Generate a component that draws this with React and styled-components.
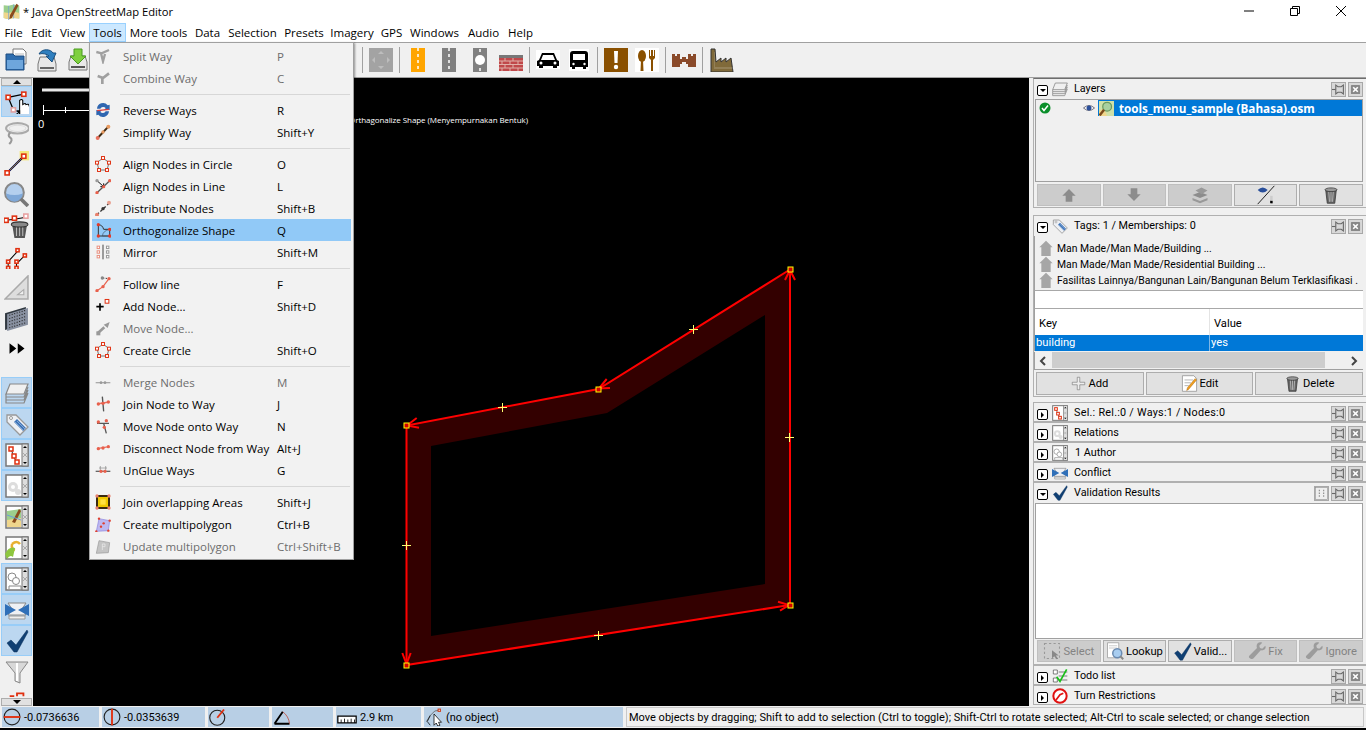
import styled, { createGlobalStyle } from "styled-components";

const GlobalStyle = createGlobalStyle`
  html, body {
    margin: 0;
    width: 1366px;
    height: 730px;
    overflow: hidden;
    background: #000;
  }
  body {
    font-family: "Open Sans", "Noto Sans", sans-serif;
    font-size: 11.5px;
    color: #000;
  }
`;

const Window = styled.div`
  position: relative;
  display: flex;
  flex-direction: column;
  width: 1366px;
  height: 730px;
  background: #f0f0f0;
  overflow: hidden;
`;

const TitleBar = styled.div`
  display: flex;
  align-items: center;
  height: 22px;
  box-sizing: border-box;
  background: #fff;
  padding: 2px 2px 0 3px;
`;

const TitleText = styled.span`
  margin-left: 3px;
  font-size: 11.2px;
  flex: 1;
`;

const WinBtn = styled.div`
  width: 46px;
  display: flex;
  justify-content: center;
  margin-top: -2px;
`;

const MenuBar = styled.div`
  display: flex;
  height: 20px;
  background: #fff;
  border-bottom: 1px solid #a0a0a0;
  padding-top: 1px;
  box-sizing: content-box;
`;

const MenuName = styled.div`
  display: flex;
  align-items: center;
  justify-content: center;
  box-sizing: border-box;
  width: ${(p) => p.$w}px;
  height: 19px;
  white-space: nowrap;
  background: ${(p) => (p.$open ? "#cce8ff" : "transparent")};
  border: 1px solid ${(p) => (p.$open ? "#99d1ff" : "transparent")};
`;

const ToolBar = styled.div`
  display: flex;
  align-items: center;
  height: 34px;
  padding-left: 4px;
  background: #f0f0f0;
  border-bottom: 1px solid #a0a0a0;
`;

const Tool = styled.div`
  flex: none;
  width: 24px;
  height: 24px;
  margin-left: ${(p) => p.$ml || 0}px;
  display: flex;
  justify-content: center;
`;

const ToolSep = styled.div`
  flex: none;
  width: 1px;
  height: 26px;
  background: #a0a0a0;
  margin-left: ${(p) => p.$ml || 0}px;
`;

const Main = styled.div`
  display: flex;
  height: 628px;
`;

const SideBar = styled.div`
  flex: none;
  width: 33px;
  display: flex;
  flex-direction: column;
  align-items: center;
`;

const SideArrow = styled.div`
  flex: none;
  box-sizing: border-box;
  width: 31px;
  height: 8px;
  margin-bottom: ${(p) => p.$mb || 0}px;
  margin-top: ${(p) => (p.$down ? "auto" : "0")};
  background: #e1e1e1;
  border: 1px solid #adadad;
  display: flex;
  align-items: center;
  justify-content: center;
  &::after {
    content: "";
    border-left: 4px solid transparent;
    border-right: 4px solid transparent;
    ${(p) => (p.$down ? "border-top: 4px solid #000;" : "border-bottom: 4px solid #000;")}
  }
`;

const SideBtn = styled.div`
  flex: none;
  box-sizing: border-box;
  width: 31px;
  height: 31px;
  margin-bottom: ${(p) => p.$mb || 0}px;
  display: flex;
  align-items: center;
  justify-content: center;
  background: ${(p) => (p.$on ? "#bcd7f0" : "transparent")};
  border: 1px solid ${(p) => (p.$on ? "#98cdf8" : "transparent")};
`;

const SideClip = styled.div`
  flex: none;
  height: 11px;
  width: 26px;
  overflow: hidden;
  display: flex;
  align-items: flex-end;
  justify-content: center;
`;

const MapView = styled.div`
  flex: none;
  width: 996px;
  height: 628px;
  background: #000;
`;

const MapSvg = styled.svg`
  display: block;
  width: 100%;
  height: 100%;
`;

const Panels = styled.div`
  flex: none;
  width: 333px;
  margin-left: 4px;
  display: flex;
  flex-direction: column;
  font-family: Roboto, sans-serif;
  font-size: 10.8px;
`;

const Panel = styled.section`
  flex: none;
  box-sizing: border-box;
  height: ${(p) => p.$h}px;
  margin-bottom: ${(p) => p.$mb || 0}px;
  border: 1px solid #b0b0b0;
  border-right: 0;
  border-top-color: ${(p) => p.$top || "#b0b0b0"};
  display: flex;
  flex-direction: column;
`;

const PanelHead = styled.header`
  flex: none;
  height: 20px;
  display: flex;
  align-items: center;
  padding: 0 3px 0 3px;
`;

const Toggle = styled.div`
  flex: none;
  box-sizing: border-box;
  width: 11px;
  height: 11px;
  margin-top: 3px;
  border: 1px solid #000;
  border-radius: 2px;
  background: #fff;
  display: flex;
  align-items: center;
  justify-content: center;
  &::after {
    content: "";
    ${(p) =>
      p.$open
        ? `border-left: 3px solid transparent; border-right: 3px solid transparent; border-top: 3px solid #000;`
        : `border-top: 3px solid transparent; border-bottom: 3px solid transparent; border-left: 3px solid #000;`}
  }
`;

const HeadIcon = styled.div`
  flex: none;
  width: 16px;
  margin-left: 4px;
`;

const HeadTitle = styled.span`
  flex: 1;
  margin-left: ${(p) => p.$ml || 6}px;
  padding-bottom: 2px;
  white-space: nowrap;
  letter-spacing: ${(p) => p.$ls || 0}px;
`;

const HeadBtn = styled.div`
  flex: none;
  box-sizing: border-box;
  width: 15px;
  height: 15px;
  margin-left: 2px;
  background: #d8d8d8;
  border: 1px solid #a8a8a8;
  display: flex;
  align-items: center;
  justify-content: center;
`;

const ListBox = styled.div`
  flex: 1;
  margin: 0 3px 0 1px;
  border: 1px solid #a0a0a0;
  background: ${(p) => p.$bg || "#f0f0f0"};
`;

const LayerRow = styled.div`
  display: flex;
  align-items: center;
  height: 16px;
`;

const LayerCheck = styled.div`
  width: 47px;
  padding-left: 3px;
  box-sizing: border-box;
`;

const LayerEye = styled.div`
  width: 15px;
`;

const LayerName = styled.div`
  flex: 1;
  display: flex;
  align-items: center;
  height: 16px;
  padding-left: 1px;
  background: #0078d7;
  color: #fff;
  font-family: "Open Sans", sans-serif;
  font-weight: 700;
  font-size: 11.7px;
  white-space: nowrap;
  overflow: hidden;
  gap: 5px;
`;

const ButtonRow = styled.div`
  flex: none;
  display: flex;
  gap: ${(p) => p.$gap || 2}px;
  height: ${(p) => p.$h || 22}px;
  margin: ${(p) => p.$m || "2px 4px 0 3px"};
`;

const PanelButton = styled.div`
  flex: 1;
  box-sizing: border-box;
  display: flex;
  align-items: center;
  justify-content: center;
  gap: 2px;
  white-space: nowrap;
  font-size: 11.2px;
  background: ${(p) => (p.$off ? "#cccccc" : "#e1e1e1")};
  border: 1px solid ${(p) => (p.$off ? "#bfbfbf" : "#adadad")};
  color: ${(p) => (p.$off ? "#838383" : "#000")};
`;

const PresetList = styled.div`
  flex: none;
  height: 54px;
  padding-top: 4px;
  box-sizing: border-box;
  margin-right: 3px;
  border-left: 1px solid #a0a0a0;
  font-size: 10.4px;
`;

const PresetRow = styled.div`
  display: flex;
  align-items: center;
  height: 16px;
  white-space: nowrap;
  overflow: hidden;
  padding-left: 3px;
  gap: 3px;
`;

const FilterInput = styled.div`
  flex: none;
  height: 19px;
  box-sizing: border-box;
  margin-right: 3px;
  background: #fff;
  border-top: 1px solid #a8a8a8;
  border-bottom: 1px solid #a8a8a8;
  border-left: 1px solid #a0a0a0;
`;

const TagTable = styled.div`
  flex: none;
  display: grid;
  grid-template-columns: 174px 1fr;
  margin-right: 3px;
  border-left: 1px solid #a0a0a0;
  font-size: 11.2px;
`;

const TagHead = styled.div`
  height: 26px;
  box-sizing: border-box;
  display: flex;
  align-items: center;
  padding: 2px 0 0 4px;
  background: #fff;
  border-left: ${(p) => (p.$second ? "1px solid #e4e4e4" : "0")};
`;

const TagCell = styled.div`
  height: 16px;
  box-sizing: border-box;
  display: flex;
  align-items: center;
  padding: 0 0 2px 1px;
  background: #0078d7;
  color: #fff;
  border-left: ${(p) => (p.$second ? "1px solid #7fb6e6" : "0")};
`;

const HScroll = styled.div`
  flex: none;
  height: 17px;
  margin: 1px 3px 0 0;
  display: flex;
  align-items: center;
  justify-content: space-between;
  padding: 0 5px 0 4px;
  background: #f0f0f0;
  position: relative;
  border-left: 1px solid #a0a0a0;
  border-bottom: 1px solid #a0a0a0;
`;

const ScrollThumb = styled.div`
  position: absolute;
  left: 17px;
  top: 0;
  width: 273px;
  height: 16px;
  background: #cdcdcd;
`;

const StatusBar = styled.div`
  flex: none;
  display: flex;
  gap: 3px;
  height: 22px;
  padding: 1px 2px 0 2px;
  box-sizing: border-box;
  font-family: Roboto, sans-serif;
  font-size: 11px;
`;

const StatusCell = styled.div`
  flex: none;
  box-sizing: border-box;
  width: ${(p) => p.$w}px;
  height: 20px;
  display: flex;
  align-items: center;
  gap: 3px;
  padding-left: 1px;
  background: #b8cfe5;
  white-space: nowrap;
`;

const HelpText = styled.div`
  flex: 1;
  height: 20px;
  box-sizing: border-box;
  display: flex;
  align-items: center;
  padding-left: 2px;
  border: 1px solid #c8c8c8;
  background: #f0f0f0;
  white-space: nowrap;
  overflow: hidden;
`;

const ScreenEdge = styled.div`
  flex: none;
  height: 2px;
  background: #000;
`;

const ToolsMenu = styled.nav`
  position: absolute;
  left: 89px;
  top: 42px;
  width: 265px;
  box-sizing: border-box;
  padding: 2px 2px 2px;
  background: #f2f2f2;
  border: 1px solid #a0a0a0;
  box-shadow: 1px 1px 2px rgba(0, 0, 0, 0.4);
`;

const MenuRow = styled.div`
  display: flex;
  align-items: center;
  height: 22px;
  white-space: nowrap;
  background: ${(p) => (p.$active ? "#91c9f7" : "transparent")};
  color: ${(p) => (p.$off ? "#6d6d6d" : "#000")};
`;

const MenuIcon = styled.div`
  flex: none;
  width: 31px;
  padding-left: 3px;
  box-sizing: border-box;
`;

const MenuLabel = styled.div`
  flex: none;
  width: 154px;
`;

const MenuSep = styled.div`
  height: 10px;
  display: flex;
  align-items: center;
  padding-left: 28px;
  &::after {
    content: "";
    flex: 1;
    height: 1px;
    margin-right: 1px;
    background: #d7d7d7;
  }
`;

const Svg = styled.svg`
  display: block;
  flex: none;
`;

const sq = (x, y, c = "#e03010", r = 2) => (
  <rect x={x - r} y={y - r} width={r * 2} height={r * 2} fill="#fff" stroke={c} strokeWidth="1.5" />
);
const dot = (x, y, c = "#e8604c", r = 2.5) => <circle cx={x} cy={y} r={r} fill={c} />;

const GlyphPanel = ({ children }) => (
  <>
    <rect x="1" y="1" width="22" height="22" fill="#fff" stroke="#777" strokeWidth="1.5" />
    {children}
    <rect x="17" y="1" width="6" height="22" fill="#ddd" stroke="#777" />
    <path d="M18 5h4l-2-2zM18 19h4l-2 2z" fill="#000" />
    <path d="M18 10l4 4M22 10l-4 4" stroke="#aaa" />
  </>
);

const ICONS = {
  logo: (
    <>
      <path d="M1 3l7 1 7-2 8 2v18l-8-1-7 2-7-2z" fill="#9ccf8d" />
      <path d="M1 13l7 1 7-2 8 2v8l-8-1-7 2-7-2z" fill="#f0d68c" />
      <path d="M8 4v20M15 2v20" stroke="#6f9fd8" />
      <path d="M19 1l-9 16-1 6 4-3 9-17z" fill="#8a4b1c" />
    </>
  ),
  open: (
    <>
      <path d="M9 1h10l3 3v12H9z" fill="#fff" stroke="#777" />
      <path d="M11 6h9M11 9h9" stroke="#bbb" />
      <path d="M2 6h7l2 2h9v14H2z" fill="#2f6eaf" stroke="#1f4d80" />
      <path d="M3 12h16v9H3z" fill="#6ea6dc" />
    </>
  ),
  save: (
    <>
      <path d="M3 16l2-7h14l2 7v7H3z" fill="#e8e8e8" stroke="#777" />
      <path d="M5 19h14v2H5z" fill="#666" />
      <path d="M4 6c3-6 12-5 14-1l3 0-4 9-6-6 3 0c-2-2-6-3-10-2z" fill="#2f7fbf" stroke="#184f80" />
    </>
  ),
  download: (
    <>
      <path d="M3 14l2-6h14l2 6v8H3z" fill="#e8e8e8" stroke="#777" />
      <path d="M5 18h14v2H5z" fill="#555" />
      <path d="M8 1h8v7h4l-8 8-8-8h4z" fill="#7fd03f" stroke="#4a9a20" />
    </>
  ),
  move: (
    <>
      <rect width="24" height="24" fill="#a3a3a3" />
      <path d="M12 3l3 3h-6zM12 21l3-3h-6zM3 12l3-3v6zM21 12l-3-3v6z" fill="#bdbdbd" />
    </>
  ),
  roadOrange: (
    <>
      <rect x="5" width="14" height="24" fill="#ffa500" />
      <path d="M12 0v24" stroke="#fff" strokeWidth="1.5" strokeDasharray="3 3" />
    </>
  ),
  roadGray: (
    <>
      <rect x="5" width="14" height="24" fill="#808080" />
      <path d="M12 0v24" stroke="#fff" strokeWidth="1.5" strokeDasharray="3 3" />
    </>
  ),
  roundabout: (
    <>
      <rect x="5" width="14" height="24" fill="#808080" />
      <circle cx="12" cy="12" r="5" fill="#fff" />
      <path d="M12 1v3M12 20v3" stroke="#fff" strokeWidth="1.5" />
    </>
  ),
  wall: (
    <>
      <rect y="7" width="24" height="3" fill="#777" />
      <rect y="10" width="24" height="13" fill="#c0484a" />
      <path d="M0 13h24M0 16.500h24M0 20h24M6 10v3M14 10v3M3 13v3.500M11 13v3.500M19 13v3.500M6 16.500v3.500M14 16.500v3.500M3 20v3M11 20v3M19 20v3" stroke="#e0b0a8" />
    </>
  ),
  car: (
    <>
      <rect y="2" width="24" height="19" fill="#fff" />
      <path d="M1 13l2-1 3-7h12l3 7 2 1v5h-2v2h-4v-2H7v2H3v-2H1z" fill="#000" />
      <path d="M7 7h10l2 5H5z" fill="#fff" />
      <circle cx="5" cy="15" r="1.500" fill="#fff" />
      <circle cx="19" cy="15" r="1.500" fill="#fff" />
    </>
  ),
  bus: (
    <>
      <rect x="2" y="1" width="20" height="22" fill="#fff" />
      <path d="M6 3h12q3 0 3 3v13h-2v2h-3v-2H8v2H5v-2H3V6q0-3 3-3z" fill="#000" />
      <rect x="6" y="6" width="12" height="6" fill="#fff" />
      <circle cx="6.500" cy="16" r="1.200" fill="#fff" />
      <circle cx="17.500" cy="16" r="1.200" fill="#fff" />
    </>
  ),
  attention: (
    <>
      <rect width="24" height="24" fill="#8a5000" />
      <path d="M10 3h4l-.5 12h-3z" fill="#fff" />
      <circle cx="12" cy="19" r="2.200" fill="#fff" />
    </>
  ),
  food: (
    <>
      <rect width="24" height="24" fill="#fff" />
      <ellipse cx="7" cy="8" rx="4" ry="6" fill="#8a5000" />
      <path d="M6 12h2l.5 11h-3zM14 2v8l2 2v11h2V12l2-2V2h-1v6h-1V2h-2v6h-1V2z" fill="#8a5000" />
    </>
  ),
  castle: (
    <path d="M0 6h3v2h2V6h3v5h2V9h4v2h2V6h3v2h2V6h3v13H0zM8 19v-3h2v-2h4v2h2v3z" fill="#8a4a2a" fillRule="evenodd" />
  ),
  factory: (
    <>
      <path d="M1 1h4l1 13 5-4v4l5-4v4l5-4 2 14H1z" fill="#806a3a" stroke="#333" />
      <path d="M4 4h1v15h18v2H4z" fill="#fff" opacity=".15" />
    </>
  ),
  select: (
    <>
      <path d="M4 8l15-3M4 8l5 12" stroke="#000" strokeWidth="1.200" />
      {sq(4, 8)}
      {sq(19, 5)}
      {sq(9, 20, "#e0a0a0")}
      <path d="M15 25V11q2-2 3 0v4q3-2 3 0 3-1 3 1 2-1 2 2v5l-2 3H17z" fill="#fff" stroke="#000" />
      <path d="M11 25l4-3M12 21h3v3" stroke="#000" />
    </>
  ),
  lasso: (
    <>
      <ellipse cx="13" cy="8" rx="11" ry="5" fill="none" stroke="#aaa" strokeWidth="2" />
      <ellipse cx="13" cy="8" rx="8" ry="3" fill="none" stroke="#ddd" />
      <path d="M6 12q-3 3 0 5t-1 6" fill="none" stroke="#999" strokeWidth="2" />
    </>
  ),
  draw: (
    <>
      <rect x="15" y="0" width="9" height="9" fill="#f4e87c" />
      <path d="M3 21L19 5" stroke="#000040" strokeWidth="2" />
      <path d="M3 21L19 5" stroke="#e0c040" strokeWidth=".6" />
      {sq(3, 21)}
      {sq(19, 5)}
    </>
  ),
  zoom: (
    <>
      <circle cx="10" cy="10" r="9" fill="#b4cfee" stroke="#888" strokeWidth="2" />
      <path d="M2 11q8 3 16 0a8 8 0 0 1-16 0z" fill="#7fa8d8" />
      <path d="M16 16l7 7" stroke="#777" strokeWidth="3.500" />
    </>
  ),
  remove: (
    <>
      <path d="M2 7l8-1 11-2" stroke="#000" fill="none" />
      {sq(2, 7)}
      {sq(10, 5)}
      {sq(21, 3, "#e8a0a0")}
      <path d="M8 12h14l-2 12H10z" fill="#555" />
      <ellipse cx="15" cy="11" rx="8" ry="2.500" fill="#888" stroke="#333" />
      <path d="M12 14v8M15 14v8M18 14v8" stroke="#bbb" />
    </>
  ),
  parallel: (
    <>
      <path d="M4 17l9-10M12 19l8-8M4 17v6M12 17v6" stroke="#000" strokeWidth="1" />
      {sq(4, 17, "#e03010", 1.500)}
      {sq(4, 23, "#e03010", 1.500)}
      {sq(13, 6, "#e03010", 1.500)}
      {sq(12, 17, "#e03010", 1.500)}
      {sq(12, 23, "#e03010", 1.500)}
      {sq(20, 11, "#e03010", 1.500)}
    </>
  ),
  triangle: (
    <>
      <path d="M23 1v22H1z" fill="#ddd" stroke="#aaa" strokeWidth="1.500" />
      <path d="M19 14v5h-6z" fill="#f0f0f0" stroke="#aaa" />
    </>
  ),
  grid: (
    <>
      <path d="M1 7l20-6v16L1 23z" fill="#303840" />
      <path d="M3 8l20-6v16L3 24z" fill="#8890a0" />
      <path d="M5 9l16-5M5 12l16-5M5 15l16-5M5 18l16-5M5 21l16-5" stroke="#222" strokeDasharray="1 1.500" />
    </>
  ),
  forward: <path d="M2 3l9 7-9 7zM13 3l9 7-9 7z" fill="#000" />,
  layers: (
    <>
      <path d="M5 3h18l-4 10H1z" fill="#f0f0f0" stroke="#888" strokeWidth="1.200" />
      <path d="M1 13v3h18l4-10M1 16v3h18l4-10M1 19v3h18l4-10" fill="none" stroke="#888" strokeWidth="1.200" />
    </>
  ),
  tag: (
    <>
      <path d="M2 3h9l12 12-8 8L2 10z" fill="#eef0f4" stroke="#999" strokeWidth="1.300" />
      <circle cx="6" cy="6" r="1.500" fill="#fff" stroke="#999" />
      <path d="M9 10l9 9 3-3-9-9z" fill="#3f74b8" />
      <path d="M10 10l8 8M12 9l8 8" stroke="#9bbce0" strokeWidth=".7" />
    </>
  ),
  selDlg: (
    <GlyphPanel>
      <path d="M6 6l3 8 3 6" stroke="#333" fill="none" />
      {sq(6, 6)}
      {sq(9, 13)}
      {sq(12, 19)}
    </GlyphPanel>
  ),
  relDlg: (
    <GlyphPanel>
      <circle cx="8" cy="13" r="5" fill="#ddd" />
      <circle cx="13" cy="18" r="3" fill="#ddd" />
      <circle cx="8" cy="13" r="2" fill="#fff" />
    </GlyphPanel>
  ),
  imgDlg: (
    <GlyphPanel>
      <path d="M2 6l14-2v18H2z" fill="#9ccf8d" />
      <path d="M2 15l14-2v9H2z" fill="#f0d68c" />
      <path d="M14 4l-7 13 3 1 6-12z" fill="#8a4b1c" />
      <path d="M2 10l14 5" stroke="#6f9fd8" />
    </GlyphPanel>
  ),
  mapDlg: (
    <>
      <GlyphPanel>
        <path d="M7 8q5-4 8 0M7 8q-1 5 3 6" stroke="#e8b030" strokeWidth="2.500" fill="none" />
      </GlyphPanel>
      <path d="M0 18q4-8 10-6l-2 9q-3-3-6 2z" fill="#8ec63f" />
    </>
  ),
  userDlg: (
    <GlyphPanel>
      <circle cx="7" cy="10" r="4" fill="none" stroke="#888" />
      <circle cx="11" cy="14" r="3.500" fill="#fff" stroke="#888" />
      <path d="M4 22v-3h12v3" fill="none" stroke="#888" />
    </GlyphPanel>
  ),
  conflict: (
    <>
      <path d="M3 5h18l-4 6 4 6H3l4-6z" fill="#eef0f4" stroke="#888" />
      <path d="M4 18h16v3H4z" fill="#eee" stroke="#999" />
      <path d="M0 6l11 6-11 6zM24 6L13 12l11 6z" fill="#2f6fb8" />
    </>
  ),
  check: <path d="M2 14l4-3 5 5L22 1l1 2-11 20h-3z" fill="#0f3f73" stroke="#0a2f58" strokeWidth=".5" />,
  filter: (
    <>
      <path d="M1 2h22l-8 11v10l-5-2v-8z" fill="#d8d8d8" stroke="#888" />
      <path d="M12 3v18" stroke="#fff" strokeWidth="2" />
    </>
  ),
  clip: (
    <path d="M4 22h5M12 22v-3h7v3" fill="none" stroke="#e03010" strokeWidth="2" />
  ),
  ok: (
    <>
      <circle cx="12" cy="12" r="11" fill="#0a8f2a" />
      <path d="M6 12l4 5 8-10" stroke="#fff" strokeWidth="3" fill="none" />
    </>
  ),
  eye: (
    <>
      <path d="M1 12q11-10 22 0-11 10-22 0z" fill="#fff" stroke="#445" strokeWidth="1.500" />
      <circle cx="12" cy="12" r="5" fill="#2a4f9a" />
    </>
  ),
  osm: (
    <>
      <path d="M0 0h24v24H0z" fill="#cfe0a8" />
      <path d="M0 16l8-4 5 12H0z" fill="#f0d68c" />
      <circle cx="13" cy="9" r="7" fill="#a8d0a0" stroke="#6a9a60" strokeWidth="2" />
      <path d="M8 14L1 23" stroke="#7a4a1c" strokeWidth="4" />
    </>
  ),
  up: <path d="M12 3l10 10h-5v9H7v-9H2z" fill="#8c8c8c" />,
  down: <path d="M7 2h10v9h5L12 21 2 11h5z" fill="#8c8c8c" />,
  mergeLayer: (
    <>
      <path d="M2 12l10-4 10 4-10 4z" fill="#8c8c8c" />
      <path d="M2 16l10 4 10-4v3l-10 4-10-4zM6 6l8-4 8 4-8 5z" fill="#999" />
    </>
  ),
  hideLayer: (
    <>
      <path d="M2 23L22 1" stroke="#222" strokeWidth="1.200" />
      <path d="M2 6q6-6 12 0-6 6-12 0z" fill="#2a4f9a" />
      <path d="M17 13h3v6h-3z" fill="#ccc" />
      <path d="M17 19h3v3h-3z" fill="#000" />
    </>
  ),
  trash: (
    <>
      <path d="M5 6h14l-2 17H7z" fill="#666" stroke="#333" />
      <ellipse cx="12" cy="5" rx="8" ry="2.500" fill="#999" stroke="#333" />
      <path d="M9 8l1 13M12 8v13M15 8l-1 13" stroke="#ccc" />
    </>
  ),
  house: <path d="M12 1l10 10h-3v13H5V11H2z" fill="#a6a6a6" />,
  plus: <path d="M10 2h4v8h8v4h-8v8h-4v-8H2v-4h8z" fill="#eee" stroke="#777" />,
  edit: (
    <>
      <path d="M2 1h16l4 4v18H2z" fill="#fff" stroke="#888" />
      <path d="M5 7h12M5 11h9M5 15h6" stroke="#999" />
      <path d="M22 7L11 20l-3 2 1-4L20 5z" fill="#f0a020" stroke="#a06010" strokeWidth=".6" />
    </>
  ),
  selBox: (
    <>
      <rect x="2" y="2" width="20" height="20" fill="none" stroke="#999" strokeWidth="1.500" strokeDasharray="3 3" />
      <path d="M12 11v11l3-3 3 4 2-1-3-4h4z" fill="#888" />
    </>
  ),
  lookup: (
    <>
      <path d="M2 1h15v20H2z" fill="#fff" stroke="#999" />
      <path d="M4 5h11M4 8h11" stroke="#bbb" />
      <circle cx="15" cy="15" r="6" fill="#a8cdf0" stroke="#6a8ab0" strokeWidth="2" />
      <path d="M19 19l4 4" stroke="#888" strokeWidth="2.500" />
    </>
  ),
  wrench: <path d="M23 5l-4 4-3-1-1-3 4-4c-5-2-9 2-7 7L2 18q-2 3 1 4 3 2 5-1l9-10c4 1 8-2 6-6z" fill="#9c9c9c" />,
  todo: (
    <>
      <path d="M2 3h6v6H2zM2 15h6v6H2zM10 6h13M10 12h13M10 18h13" fill="#fff" stroke="#444" />
      <path d="M7 13l5 7L22 2" stroke="#18c018" strokeWidth="2.500" fill="none" />
    </>
  ),
  turn: (
    <>
      <circle cx="12" cy="12" r="10" fill="#fff" stroke="#e01010" strokeWidth="3" />
      <path d="M6 18l6-8 5-2" stroke="#e01010" strokeWidth="2.500" fill="none" />
    </>
  ),
  pin: (
    <>
      <path d="M0 12h7" stroke="#666" strokeWidth="2" />
      <path d="M7 4l4 3h6l4-3v16l-4-3h-6l-4 3z" fill="#d8d8d8" stroke="#666" strokeWidth="2" />
    </>
  ),
  closeX: (
    <>
      <rect x="2" y="2" width="20" height="20" rx="2" fill="#888" />
      <path d="M7 7l10 10M17 7L7 17" stroke="#fff" strokeWidth="3.500" />
    </>
  ),
  sliders: (
    <>
      <rect x="1" y="1" width="22" height="22" fill="#eee" stroke="#888" />
      <path d="M8 5v14M16 5v14" stroke="#888" strokeWidth="2" strokeDasharray="3 2" />
    </>
  ),
  lat: (
    <>
      <circle cx="12" cy="12" r="10.500" fill="none" stroke="#222" strokeWidth="1.500" />
      <path d="M1 12h22" stroke="#e03010" strokeWidth="2.500" />
    </>
  ),
  lon: (
    <>
      <circle cx="12" cy="12" r="10.500" fill="none" stroke="#222" strokeWidth="1.500" />
      <path d="M12 1v22" stroke="#e03010" strokeWidth="2.500" />
    </>
  ),
  heading: (
    <>
      <circle cx="11" cy="13" r="10" fill="none" stroke="#222" strokeWidth="1.500" />
      <path d="M11 13L20 2" stroke="#e03010" strokeWidth="2.500" />
    </>
  ),
  angle: (
    <>
      <path d="M2 21h20M2 21L13 5" fill="none" stroke="#000" strokeWidth="2.500" />
      <path d="M13 5q8 6 9 16" fill="none" stroke="#c04030" />
    </>
  ),
  ruler: (
    <>
      <path d="M1 11h22v8H1z" fill="#fff" stroke="#000" strokeWidth="1.500" />
      <path d="M5 15v4M9 14v5M13 15v4M17 14v5M21 15v4" stroke="#000" />
    </>
  ),
  pointer: (
    <>
      <path d="M2 18l5-8 6-6 6-1" fill="none" stroke="#555" />
      {sq(19, 3, "#d04020", 1.500)}
      <path d="M7 10l-4 8 4 5" fill="none" stroke="#000" />
      <path d="M12 8v15l3-3 2 4 3-1-2-4h4z" fill="#fff" stroke="#000" />
    </>
  ),
  splitWay: <path d="M2 6l8 2 11-5M9 8l3 12 3-11" fill="none" stroke="#a0a0a0" strokeWidth="3.500" />,
  combine: <path d="M4 9l8 3 9-7M11 12v9" fill="none" stroke="#a0a0a0" strokeWidth="4" />,
  reverse: (
    <>
      <path d="M3 10a9 9 0 0 1 16-5l3-1v8h-8l2-3a5 5 0 0 0-8 1z" fill="#2f66b0" />
      <path d="M21 14a9 9 0 0 1-16 5l-3 1v-8h8l-2 3a5 5 0 0 0 8-1z" fill="#2f66b0" />
      <path d="M3 13l18-2" stroke="#e04040" strokeWidth="2" />
    </>
  ),
  simplify: (
    <>
      <path d="M4 21L20 4" stroke="#402a10" strokeWidth="3" />
      {dot(20, 4, "#e89a60", 3)}
      {dot(4, 21, "#e8705c", 3)}
      {dot(12, 12, "#e89a60", 2.500)}
    </>
  ),
  circleWay: (
    <>
      <path d="M12 3l9 7-3 11H6L3 10z" fill="none" stroke="#333" />
      {sq(12, 3, "#e03010", 2.200)}
      {sq(21, 10, "#e03010", 2.200)}
      {sq(18, 21, "#e03010", 2.200)}
      {sq(6, 21, "#e03010", 2.200)}
      {sq(3, 10, "#e03010", 2.200)}
    </>
  ),
  alignLine: (
    <>
      <path d="M3 22L22 4" stroke="#555" strokeWidth="2" />
      <path d="M3 4l10 9M13 8v5H8" stroke="#111" strokeWidth="1.500" fill="none" />
      {dot(3, 4, "#999")}
      {dot(22, 4)}
      {dot(3, 22)}
      {dot(13, 13)}
    </>
  ),
  distribute: (
    <>
      <path d="M3 22L22 4" stroke="#333" strokeWidth="2" strokeDasharray="4 3" />
      {dot(3, 22, "#e8806c", 3)}
      {dot(12, 13, "#333", 2.500)}
      {dot(21, 4, "#e8a090", 3)}
    </>
  ),
  ortho: (
    <>
      <path d="M5 4v17h17V11H13q-2-7-8-7z" fill="none" stroke="#333" strokeWidth="1.500" />
      <path d="M22 11v10H11q1-8 11-10z" fill="none" stroke="#456" />
      {dot(5, 4, "#e03c2c")}
      {dot(5, 21, "#e03c2c")}
      {dot(22, 21, "#e03c2c")}
      {dot(22, 11, "#e03c2c")}
    </>
  ),
  mirror: (
    <>
      <path d="M12 1v22" stroke="#444" strokeWidth="1.500" />
      {sq(5, 5, "#e89080", 1.800)}
      {sq(5, 12, "#e89080", 1.800)}
      {sq(5, 19, "#e89080", 1.800)}
      {sq(19, 5, "#999", 1.800)}
      {sq(19, 12, "#999", 1.800)}
      {sq(19, 19, "#999", 1.800)}
    </>
  ),
  follow: (
    <>
      <path d="M3 22l9-6 9-12" stroke="#e8604c" strokeWidth="1.800" fill="none" />
      <path d="M12 3l9 1" stroke="#333" strokeWidth="1.500" strokeDasharray="2 2" />
      {dot(3, 22)}
      {dot(12, 16)}
      {dot(21, 4)}
      {dot(11, 3, "#888")}
    </>
  ),
  addNode: (
    <>
      <path d="M2 13h11M7.500 8v11" stroke="#000" strokeWidth="2.500" />
      {sq(18, 5, "#e03010", 2.800)}
    </>
  ),
  moveNode: (
    <>
      <path d="M4 20L14 11" stroke="#999" strokeWidth="4" />
      <path d="M13 7l9-4-3 9z" fill="#999" />
      <rect x="2" y="17" width="6" height="6" fill="#999" />
    </>
  ),
  merge: (
    <>
      <path d="M1 13h22" stroke="#aaa" strokeWidth="2" />
      {dot(9, 13, "#999", 2)}
      {dot(15, 13, "#999", 2)}
    </>
  ),
  joinNode: (
    <>
      <path d="M11 1l2 22" stroke="#555" strokeWidth="2" />
      <path d="M3 12l18-3" stroke="#e87060" strokeWidth="2" />
      {dot(5, 12)}
      {dot(12, 11)}
      {dot(20, 9)}
    </>
  ),
  moveOnto: (
    <>
      <path d="M3 8h18M13 8l4 15" stroke="#555" strokeWidth="2" />
      {dot(5, 6)}
      {dot(17, 4)}
      {dot(14, 14)}
    </>
  ),
  disconnect: (
    <>
      <path d="M3 13l18-3" stroke="#e87060" strokeWidth="2" />
      {dot(5, 13)}
      {dot(12, 12)}
      {dot(20, 10)}
    </>
  ),
  unglue: (
    <>
      <path d="M1 14h22" stroke="#666" strokeWidth="2" />
      <path d="M8 6v6M16 6v6M6 9h12" stroke="#888" />
      {dot(9, 14)}
      {dot(15, 14)}
    </>
  ),
  joinAreas: (
    <>
      <rect x="3" y="3" width="18" height="18" fill="#f0c800" stroke="#3a2a10" strokeWidth="3" />
      <rect x="8" y="8" width="8" height="8" fill="#ffe040" />
      {dot(3, 3, "#e8806c")}
      {dot(21, 3, "#e8806c")}
      {dot(3, 21, "#e8806c")}
      {dot(21, 21, "#e8806c")}
    </>
  ),
  createMulti: (
    <>
      <path d="M6 4l16 3-2 15-18 1z" fill="#bcb8f0" stroke="#8a80e0" />
      {dot(6, 4, "#e04030", 1.800)}
      {dot(22, 7, "#e04030", 1.800)}
      {dot(20, 22, "#e04030", 1.800)}
      {dot(2, 23, "#e04030", 1.800)}
      {dot(13, 11, "#e04030", 1.800)}
      {dot(9, 16, "#e04030", 1.800)}
    </>
  ),
  updateMulti: (
    <>
      <path d="M6 4l16 3-2 15-18 1z" fill="#c4c4c4" stroke="#999" />
      <path d="M11 9v9M11 9h4v4h-4" stroke="#eee" fill="none" />
    </>
  ),
};

const Ico = ({ n, s = 16, w }) => (
  <Svg width={w || s} height={s} viewBox="0 0 24 24">
    {ICONS[n]}
  </Svg>
);

const menuNames = [
  ["File", 27],
  ["Edit", 29],
  ["View", 33],
  ["Tools", 37, true],
  ["More tools", 65],
  ["Data", 33],
  ["Selection", 57],
  ["Presets", 46],
  ["Imagery", 50],
  ["GPS", 29],
  ["Windows", 57],
  ["Audio", 41],
  ["Help", 33],
];

// null is a separator
const toolItems = [
  { label: "Split Way", key: "P", icon: "splitWay", off: true },
  { label: "Combine Way", key: "C", icon: "combine", off: true },
  null,
  { label: "Reverse Ways", key: "R", icon: "reverse" },
  { label: "Simplify Way", key: "Shift+Y", icon: "simplify" },
  null,
  { label: "Align Nodes in Circle", key: "O", icon: "circleWay" },
  { label: "Align Nodes in Line", key: "L", icon: "alignLine" },
  { label: "Distribute Nodes", key: "Shift+B", icon: "distribute" },
  { label: "Orthogonalize Shape", key: "Q", icon: "ortho", active: true },
  { label: "Mirror", key: "Shift+M", icon: "mirror" },
  null,
  { label: "Follow line", key: "F", icon: "follow" },
  { label: "Add Node...", key: "Shift+D", icon: "addNode" },
  { label: "Move Node...", key: "", icon: "moveNode", off: true },
  { label: "Create Circle", key: "Shift+O", icon: "circleWay" },
  null,
  { label: "Merge Nodes", key: "M", icon: "merge", off: true },
  { label: "Join Node to Way", key: "J", icon: "joinNode" },
  { label: "Move Node onto Way", key: "N", icon: "moveOnto" },
  { label: "Disconnect Node from Way", key: "Alt+J", icon: "disconnect" },
  { label: "UnGlue Ways", key: "G", icon: "unglue" },
  null,
  { label: "Join overlapping Areas", key: "Shift+J", icon: "joinAreas" },
  { label: "Create multipolygon", key: "Ctrl+B", icon: "createMulti" },
  { label: "Update multipolygon", key: "Ctrl+Shift+B", icon: "updateMulti", off: true },
];

const sideTop = ["select", "lasso", "draw", "zoom", "remove", "parallel", "triangle", "grid", "forward"];
const sideBottom = [
  ["layers", true],
  ["tag", true],
  ["selDlg", true],
  ["relDlg", true],
  ["imgDlg", false],
  ["mapDlg", false],
  ["userDlg", true],
  ["conflict", true],
  ["check", true],
  ["filter", false],
];

const nodes = [
  [790, 269.5],
  [598.5, 389],
  [406.5, 425.5],
  [406.5, 665],
  [790, 605],
];
const mids = [
  [693.5, 329.5],
  [502.5, 407.5],
  [406.5, 545.5],
  [598.5, 635.5],
  [789.5, 437.5],
];
const barbs = [
  "M606.7 379L599 388.500L610 388",
  "M416.7 418L407 425.500L419 427.700",
  "M402.300 653L406.500 664L410.700 653",
  "M778 601.700L789 605L780 610.700",
  "M785 280L790 270L795 280",
];

function MapCanvas() {
  return (
    <MapView>
      <MapSvg viewBox="33 78 996 628">
        <path
          fillRule="evenodd"
          fill="#330000"
          d="M790 269.500L598.500 389L406.500 425.500V665L790 605ZM765 315V584L431 636V446L607 413Z"
        />
        <path d="M790 269.500L598.500 389L406.500 425.500V665L790 605Z" fill="none" stroke="#f00" strokeWidth="2" />
        {barbs.map((d) => (
          <path key={d} d={d} fill="none" stroke="#f00" strokeWidth="2" />
        ))}
        {mids.map(([x, y]) => (
          <path key={x + "," + y} d={`M${x - 4.5} ${y}h9M${x} ${y - 4.5}v9`} stroke="#ffff70" strokeWidth="1" />
        ))}
        {nodes.map(([x, y]) => (
          <rect
            key={x + "," + y}
            x={Math.floor(x) - 2.5 + 0.5}
            y={Math.floor(y) - 2.5 + 0.5}
            width="5"
            height="5"
            fill="#d00000"
            stroke="#ffff00"
            strokeWidth="1"
          />
        ))}
        <path d="M42 90h50" stroke="#e8e8e8" strokeWidth="3" />
        <path d="M43 110.500h50M43.500 105v10M65.500 107v6" stroke="#fff" strokeWidth="1" />
        <text x="38" y="128" fill="#fff" fontSize="11" fontFamily="Open Sans">
          0
        </text>
        <text x="349" y="123" fill="#fff" fontSize="8" fontFamily="Open Sans" textLength="179">
          Orthagonalize Shape (Menyempurnakan Bentuk)
        </text>
      </MapSvg>
    </MapView>
  );
}

function Head({ open, icon, title, extra, ml, ls }) {
  return (
    <PanelHead>
      <Toggle $open={open} />
      <HeadIcon>
        <Ico n={icon} s={16} />
      </HeadIcon>
      <HeadTitle $ml={ml} $ls={ls}>
        {title}
      </HeadTitle>
      {extra && (
        <HeadBtn>
          <Ico n="sliders" s={13} />
        </HeadBtn>
      )}
      <HeadBtn>
        <Ico n="pin" s={13} />
      </HeadBtn>
      <HeadBtn>
        <Ico n="closeX" s={11} />
      </HeadBtn>
    </PanelHead>
  );
}

function RightPanels() {
  return (
    <Panels>
      <Panel $h={130} $mb={7} $top="#6e6e6e">
        <Head open icon="layers" title="Layers" />
        <ListBox>
          <LayerRow>
            <LayerCheck>
              <Ico n="ok" s={12} />
            </LayerCheck>
            <LayerEye>
              <Ico n="eye" s={12} />
            </LayerEye>
            <LayerName>
              <Ico n="osm" s={15} />
              <span>tools_menu_sample (Bahasa).osm</span>
            </LayerName>
          </LayerRow>
        </ListBox>
        <ButtonRow $m="2px 3px 1px 3px">
          <PanelButton $off>
            <Ico n="up" s={16} />
          </PanelButton>
          <PanelButton $off>
            <Ico n="down" s={16} />
          </PanelButton>
          <PanelButton $off>
            <Ico n="mergeLayer" s={18} />
          </PanelButton>
          <PanelButton>
            <Ico n="hideLayer" s={20} />
          </PanelButton>
          <PanelButton>
            <Ico n="trash" s={18} />
          </PanelButton>
        </ButtonRow>
      </Panel>

      <Panel $h={182} $mb={5}>
        <Head open icon="tag" title="Tags: 1 / Memberships: 0" />
        <PresetList>
          <PresetRow>
            <Ico n="house" s={16} />
            Man Made/Man Made/Building ...
          </PresetRow>
          <PresetRow>
            <Ico n="house" s={16} />
            Man Made/Man Made/Residential Building ...
          </PresetRow>
          <PresetRow>
            <Ico n="house" s={16} />
            Fasilitas Lainnya/Bangunan Lain/Bangunan Belum Terklasifikasi .
          </PresetRow>
        </PresetList>
        <FilterInput />
        <TagTable>
          <TagHead>Key</TagHead>
          <TagHead $second>Value</TagHead>
          <TagCell>building</TagCell>
          <TagCell $second>yes</TagCell>
        </TagTable>
        <HScroll>
          <ScrollThumb />
          <Svg width="8" height="10" viewBox="0 0 8 10">
            <path d="M6 1L2 5l4 4" fill="none" stroke="#444" strokeWidth="2" />
          </Svg>
          <Svg width="8" height="10" viewBox="0 0 8 10">
            <path d="M2 1l4 4-4 4" fill="none" stroke="#444" strokeWidth="2" />
          </Svg>
        </HScroll>
        <ButtonRow $h={23} $m="2px 3px 0 2px">
          <PanelButton>
            <Ico n="plus" s={15} />
            <span>Add</span>
          </PanelButton>
          <PanelButton>
            <Ico n="edit" s={17} />
            <span>Edit</span>
          </PanelButton>
          <PanelButton>
            <Ico n="trash" s={17} />
            <span>Delete</span>
          </PanelButton>
        </ButtonRow>
      </Panel>

      <Panel $h={20}>
        <Head icon="selDlg" title="Sel.: Rel.:0 / Ways:1 / Nodes:0" ls={0.25} />
      </Panel>
      <Panel $h={20}>
        <Head icon="relDlg" title="Relations" />
      </Panel>
      <Panel $h={20}>
        <Head icon="userDlg" title="1 Author" ml={7} />
      </Panel>
      <Panel $h={20}>
        <Head icon="conflict" title="Conflict" />
      </Panel>
      <Panel $h={183}>
        <Head open icon="check" title="Validation Results" extra />
        <ListBox $bg="#fff" />
        <ButtonRow $m="1px 3px 2px 3px">
          <PanelButton $off>
            <Ico n="selBox" s={18} />
            <span>Select</span>
          </PanelButton>
          <PanelButton>
            <Ico n="lookup" s={18} />
            <span>Lookup</span>
          </PanelButton>
          <PanelButton>
            <Ico n="check" s={19} />
            <span>Valid...</span>
          </PanelButton>
          <PanelButton $off>
            <Ico n="wrench" s={18} />
            <span>Fix</span>
          </PanelButton>
          <PanelButton $off>
            <Ico n="wrench" s={18} />
            <span>Ignore</span>
          </PanelButton>
        </ButtonRow>
      </Panel>
      <Panel $h={20}>
        <Head icon="todo" title="Todo list" />
      </Panel>
      <Panel $h={20}>
        <Head icon="turn" title="Turn Restrictions" />
      </Panel>
    </Panels>
  );
}

export default function App() {
  return (
    <Window>
      <GlobalStyle />
      <TitleBar>
        <Ico n="logo" s={17} />
        <TitleText>* Java OpenStreetMap Editor</TitleText>
        <WinBtn>
          <Svg width="10" height="10" viewBox="0 0 10 10">
            <path d="M0 5h10" stroke="#000" />
          </Svg>
        </WinBtn>
        <WinBtn>
          <Svg width="10" height="10" viewBox="0 0 10 10">
            <path d="M.5 2.500h7v7h-7zM2.500 2.500v-2h7v7h-2" fill="none" stroke="#000" />
          </Svg>
        </WinBtn>
        <WinBtn>
          <Svg width="10" height="10" viewBox="0 0 10 10">
            <path d="M0 0l10 10M10 0L0 10" stroke="#000" />
          </Svg>
        </WinBtn>
      </TitleBar>

      <MenuBar>
        {menuNames.map(([name, w, open]) => (
          <MenuName key={name} $w={w} $open={open}>
            {name}
          </MenuName>
        ))}
      </MenuBar>

      <ToolBar>
        <Tool><Ico n="open" s={24} /></Tool>
        <Tool $ml={7}><Ico n="save" s={24} /></Tool>
        <Tool $ml={7}><Ico n="download" s={24} /></Tool>
        <ToolSep $ml={272} />
        <Tool $ml={6}><Ico n="move" s={24} /></Tool>
        <ToolSep $ml={6} />
        <Tool $ml={6}><Ico n="roadOrange" s={24} /></Tool>
        <Tool $ml={7}><Ico n="roadGray" s={24} /></Tool>
        <Tool $ml={7}><Ico n="roundabout" s={24} /></Tool>
        <Tool $ml={7}><Ico n="wall" s={24} /></Tool>
        <ToolSep $ml={6} />
        <Tool $ml={6}><Ico n="car" s={24} /></Tool>
        <Tool $ml={7}><Ico n="bus" s={24} /></Tool>
        <ToolSep $ml={6} />
        <Tool $ml={6}><Ico n="attention" s={24} /></Tool>
        <Tool $ml={7}><Ico n="food" s={24} /></Tool>
        <ToolSep $ml={6} />
        <Tool $ml={6}><Ico n="castle" s={24} /></Tool>
        <ToolSep $ml={6} />
        <Tool $ml={7}><Ico n="factory" s={24} /></Tool>
      </ToolBar>

      <Main>
        <SideBar>
          <SideArrow $mb={0} />
          {sideTop.map((n, i) => (
            <SideBtn key={n} $on={i === 0} $mb={i === sideTop.length - 1 ? 12 : 0}>
              <Ico n={n} s={n === "forward" ? 18 : 25} />
            </SideBtn>
          ))}
          {sideBottom.map(([n, on]) => (
            <SideBtn key={n} $on={on}>
              <Ico n={n} s={24} />
            </SideBtn>
          ))}
          <SideClip>
            <Ico n="clip" s={22} />
          </SideClip>
          <SideArrow $down />
        </SideBar>
        <MapCanvas />
        <RightPanels />
      </Main>

      <StatusBar>
        <StatusCell $w={97}>
          <Ico n="lat" s={18} />
          -0.0736636
        </StatusCell>
        <StatusCell $w={103}>
          <Ico n="lon" s={18} />
          -0.0353639
        </StatusCell>
        <StatusCell $w={61}>
          <Ico n="heading" s={18} />
        </StatusCell>
        <StatusCell $w={61}>
          <Ico n="angle" s={18} />
        </StatusCell>
        <StatusCell $w={85}>
          <Ico n="ruler" s={20} />
          2.9 km
        </StatusCell>
        <StatusCell $w={199}>
          <Ico n="pointer" s={18} />
          (no object)
        </StatusCell>
        <HelpText>
          Move objects by dragging; Shift to add to selection (Ctrl to toggle); Shift-Ctrl to rotate selected; Alt-Ctrl to scale selected; or change selection
        </HelpText>
      </StatusBar>
      <ScreenEdge />

      <ToolsMenu>
        {toolItems.map((item, i) =>
          item ? (
            <MenuRow key={item.label} $off={item.off} $active={item.active}>
              <MenuIcon>
                <Ico n={item.icon} s={16} />
              </MenuIcon>
              <MenuLabel>{item.label}</MenuLabel>
              <span>{item.key}</span>
            </MenuRow>
          ) : (
            <MenuSep key={"sep" + i} />
          )
        )}
      </ToolsMenu>
    </Window>
  );
}
